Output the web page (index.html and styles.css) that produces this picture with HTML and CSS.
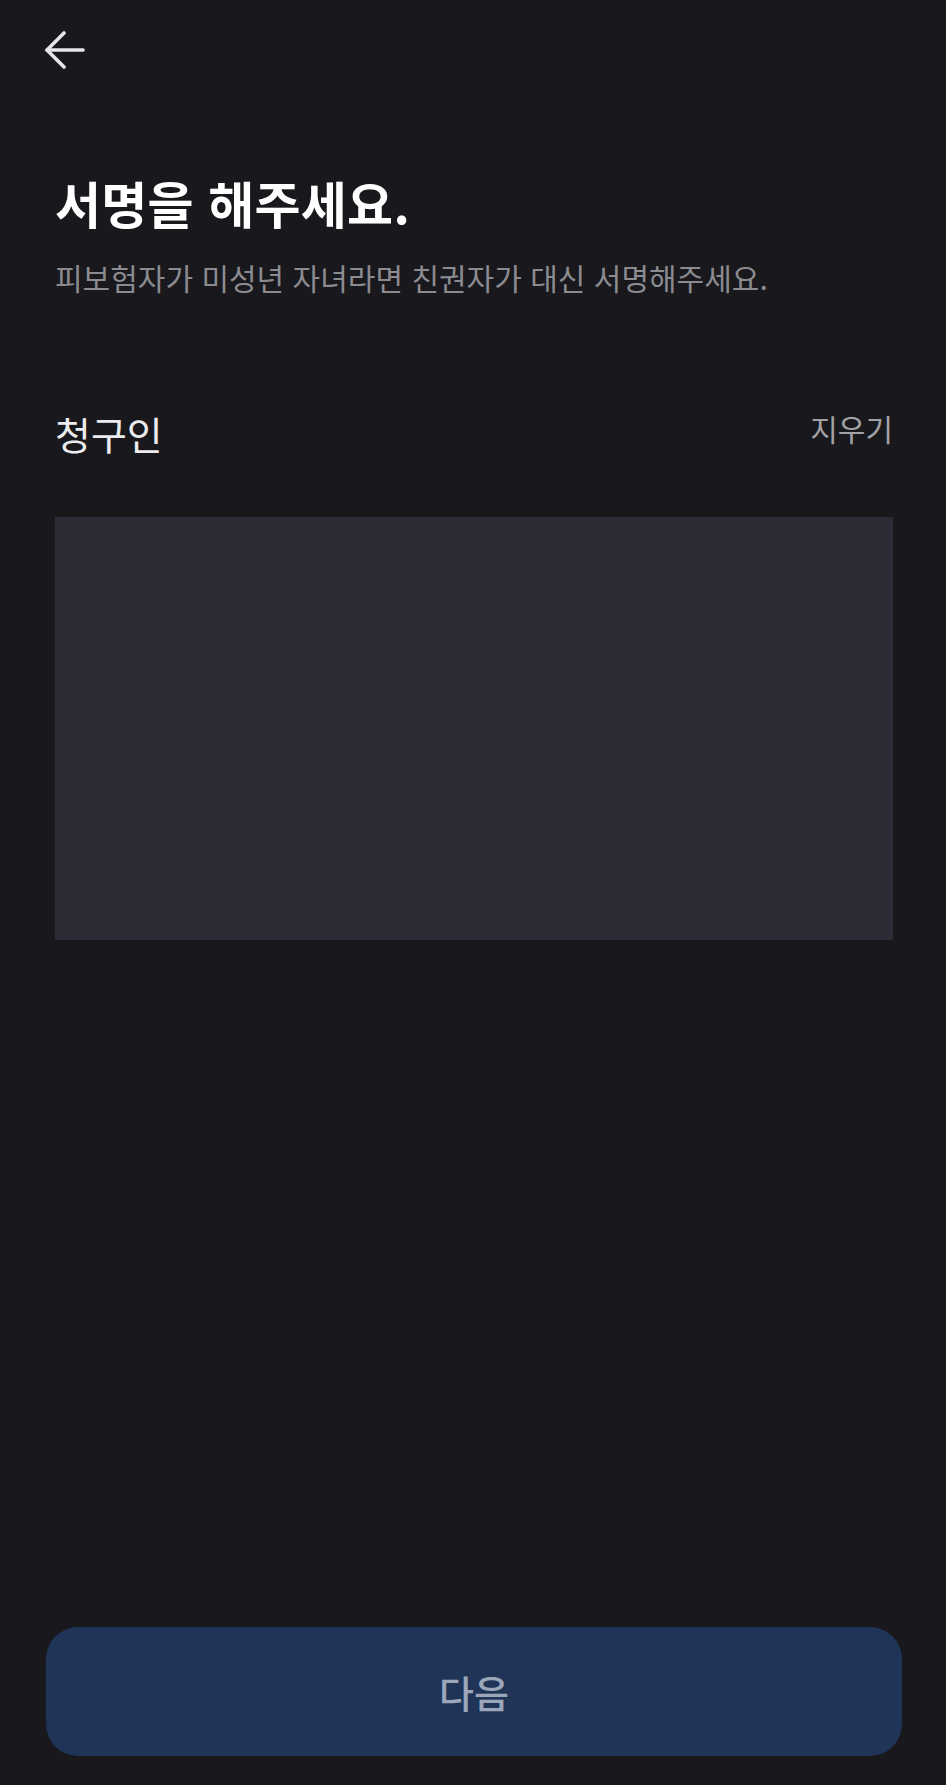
FILE: index.html
```html
<!DOCTYPE html>
<html lang="ko">
<head>
  <meta charset="UTF-8">
  <title>서명</title>
  <link rel="stylesheet" href="styles.css">
</head>
<body>
  <div class="screen">
    <div class="topBar">
      <button class="backBtn" aria-label="뒤로">
        <svg width="40" height="40" viewBox="0 0 40 40" fill="none" stroke="#e6e6e8" stroke-width="3.6" stroke-linecap="round" stroke-linejoin="round">
          <path d="M38 20H2"/>
          <path d="M19 3L2 20l17 17"/>
        </svg>
      </button>
    </div>

    <div class="intro">
      <h1>서명을 해주세요.</h1>
      <p>피보험자가 미성년 자녀라면 친권자가 대신 서명해주세요.</p>
    </div>

    <div class="signBlock">
      <div class="signHead">
        <span class="signLabel">청구인</span>
        <button class="clearBtn">지우기</button>
      </div>
      <div class="signPad"></div>
    </div>

    <div class="bottom">
      <button class="nextBtn">다음</button>
    </div>
  </div>
</body>
</html>
```

FILE: styles.css
```css
html, body {
  margin: 0;
  padding: 0;
  background: #18181d;
  font-family: "Noto Sans CJK KR", "Noto Sans", sans-serif;
  color: #fff;
}
.screen {
  width: 946px;
  height: 1785px;
  display: flex;
  flex-direction: column;
  box-sizing: border-box;
}
button {
  font-family: inherit;
  background: none;
  border: 0;
  padding: 0;
  cursor: pointer;
}
.topBar {
  height: 100px;
  padding-left: 45px;
  display: flex;
  align-items: center;
}
.backBtn {
  width: 40px;
  height: 40px;
  display: block;
}
.backBtn svg { display: block; }
.intro {
  padding: 70px 55px 0;
}
.intro h1 {
  margin: 0;
  font-size: 50px;
  font-weight: 700;
  line-height: 64px;
  letter-spacing: 0.3px;
  color: #fff;
}
.intro p {
  margin: 23px 0 0;
  font-size: 30px;
  line-height: 40px;
  color: #8b8b90;
}
.signBlock {
  padding: 111px 53px 0 55px;
}
.signHead {
  display: flex;
  justify-content: space-between;
  align-items: flex-start;
}
.signLabel {
  font-size: 39px;
  line-height: 50px;
  color: #ececee;
}
.clearBtn {
  font-size: 30px;
  line-height: 40px;
  color: #a2a2a7;
}
.signPad {
  margin-top: 59px;
  height: 423px;
  background: #2c2c36;
}
.bottom {
  margin-top: auto;
  padding: 0 44px 29px 46px;
}
.nextBtn {
  width: 100%;
  height: 129px;
  border-radius: 32px;
  background: #1f3456;
  color: #9ba6ba;
  font-size: 38px;
  font-weight: 500;
}
```
